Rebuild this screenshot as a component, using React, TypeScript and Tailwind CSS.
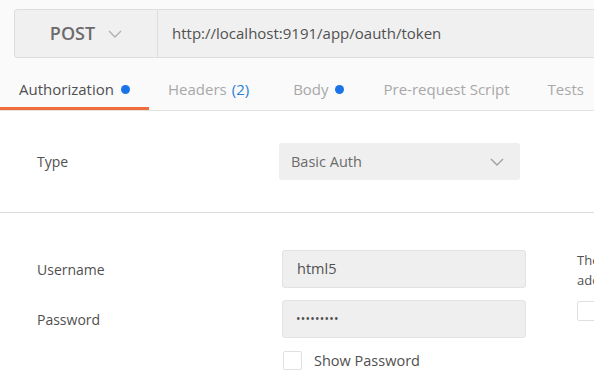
import React from "react";

function Chevron({ className = "" }: { className?: string }) {
  return (
    <svg width="14" height="8" viewBox="0 0 14 8" className={className} fill="none">
      <path d="M1 1l6 6 6-6" stroke="currentColor" strokeWidth="1.4" />
    </svg>
  );
}

export default function App() {
  return (
    <div
      className="w-[594px] h-[377px] overflow-hidden bg-white text-[14px] text-[#505050]"
      style={{ fontFamily: '"Open Sans", "Noto Sans", sans-serif' }}
    >
      <div className="bg-[#fafafa]">
        <div className="pt-[9px] pl-[14px]">
          <div className="w-[600px] h-[49px] flex bg-[#f0f0f0] border border-[#dddddd] rounded-l-[3px]">
            <div className="w-[143px] shrink-0 flex items-center justify-center gap-[13px] border-r border-[#dddddd]">
              <span className="text-[18px] font-semibold text-[#6b6b6b]">POST</span>
              <Chevron className="text-[#b0b0b0]" />
            </div>
            <div className="flex items-center pl-[14px] text-[15px] text-[#505050]">
              http://localhost:9191/app/oauth/token
            </div>
          </div>
        </div>
        <div className="flex h-[53px] border-b border-[#e2e2e2] text-[15px] text-[#a8a8a8] whitespace-nowrap">
          <div className="w-[149px] shrink-0 pl-[19px] flex items-center border-b-[3px] border-[#f26b3a] pt-[13px] text-[#505050]">
            Authorization
            <span className="ml-[7px] w-[9px] h-[9px] rounded-full bg-[#1a74e8]" />
          </div>
          <div className="shrink-0 pl-[19px] pt-[10px] flex items-center">
            Headers <span className="ml-[5px] text-[#2a7ed8]">(2)</span>
          </div>
          <div className="shrink-0 pl-[44px] pt-[10px] flex items-center">
            Body
            <span className="ml-[6px] w-[9px] h-[9px] rounded-full bg-[#1a74e8]" />
          </div>
          <div className="shrink-0 pl-[40px] pt-[10px] flex items-center">Pre-request Script</div>
          <div className="shrink-0 pl-[38px] pt-[10px] flex items-center">Tests</div>
        </div>
      </div>

      <div className="pt-[32px] pb-[32px] flex items-center border-b border-[#dcdcdc]">
        <div className="w-[279px] shrink-0 pl-[37px] text-[#505050]">Type</div>
        <div className="w-[241px] shrink-0 h-[37px] rounded-[3px] bg-[#efefef] flex items-center justify-between pl-[12px] pr-[16px] text-[14.5px] text-[#6b6b6b]">
          <span>Basic Auth</span>
          <Chevron className="text-[#a0a0a0]" />
        </div>
      </div>

      <div className="pt-[37px] flex">
        <div className="w-[282px] shrink-0 pl-[37px] flex flex-col">
          <div className="h-[38px] flex items-center">Username</div>
          <div className="h-[38px] mt-[12px] flex items-center">Password</div>
        </div>
        <div className="w-[244px] shrink-0 flex flex-col">
          <div className="h-[38px] rounded-[3px] bg-[#efefef] border border-[#e2e2e2] flex items-center pl-[14px] text-[14.5px] text-[#505050]">
            html5
          </div>
          <div className="h-[38px] mt-[12px] rounded-[3px] bg-[#efefef] border border-[#e2e2e2] flex items-center pl-[13px] text-[#505050] text-[12px] tracking-[0.25px]">
            •••••••••
          </div>
          <div className="mt-[12px] flex items-center">
            <div className="w-[19px] h-[19px] ml-[1px] border border-[#e0e0e0] bg-white rounded-[2px]" />
            <span className="ml-[12px] text-[14.5px] text-[#505050]">Show Password</span>
          </div>
        </div>
        <div className="shrink-0 pl-[51px] flex flex-col text-[13px] leading-[20px] text-[#505050] whitespace-nowrap">
          <div>The</div>
          <div>ado</div>
          <div className="mt-[11px] w-[20px] h-[20px] border border-[#e0e0e0] bg-white rounded-[2px]" />
        </div>
      </div>
    </div>
  );
}
